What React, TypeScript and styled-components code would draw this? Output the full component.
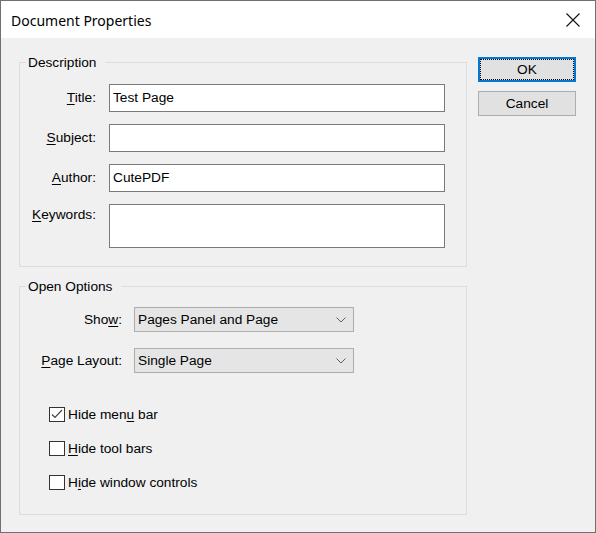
import React from 'react'
import styled, { createGlobalStyle } from 'styled-components'

const GlobalStyle = createGlobalStyle`
	html, body {
		margin: 0;
		padding: 0;
		background: #ffffff;
	}
	* {
		box-sizing: border-box;
	}
`

const Window = styled.div`
	width: 596px;
	height: 533px;
	border: 1px solid #707070;
	display: flex;
	flex-direction: column;
	font-family: 'Liberation Sans', Arial, sans-serif;
	font-size: 13.7px;
	color: #000;
	overflow: hidden;
`

const TitleBar = styled.div`
	height: 37px;
	flex: none;
	background: #fff;
	display: flex;
	align-items: center;
	justify-content: space-between;
	padding: 0 14px 0 10px;
`

const TitleText = styled.div`
	font-family: 'Noto Sans', 'Open Sans', sans-serif;
	font-size: 14px;
	padding-top: 1px;
`

const CloseButton = styled.div`
	width: 16px;
	height: 16px;
	display: flex;
	align-items: center;
	justify-content: center;
`

const Body = styled.div`
	flex: 1;
	background: #f0f0f0;
	display: flex;
	padding: 16px 18px 0 18px;
	gap: 11px;
`

const Groups = styled.div`
	display: flex;
	flex-direction: column;
	gap: 11px;
`

const Group = styled.fieldset<{ $height: number }>`
	margin: 0;
	width: 448px;
	height: ${(p) => p.$height}px;
	border: 1px solid #dcdcdc;
	padding: 0 0 0 6px;
`

const Legend = styled.legend`
	padding: 0 9px 0 2px;
	line-height: 17px;
	margin-left: 0;
`

const FieldGrid = styled.div`
	display: grid;
	grid-template-columns: 70px 336px;
	column-gap: 13px;
	row-gap: 12px;
	margin-top: 13px;
`

const Label = styled.div<{ $top?: number }>`
	text-align: right;
	padding-top: ${(p) => p.$top ?? 6}px;
	line-height: 16px;
	white-space: nowrap;
`

const Key = styled.span`
	text-decoration: underline;
	text-underline-offset: 2px;
`

const TextBox = styled.div<{ $tall?: boolean }>`
	height: ${(p) => (p.$tall ? 44 : 28)}px;
	background: #fff;
	border: 1px solid #7a7a7a;
	padding: 5px 3px;
	line-height: 16px;
`

const OptionGrid = styled.div`
	display: grid;
	grid-template-columns: 96px 220px;
	column-gap: 12px;
	row-gap: 16px;
	margin-top: 12px;
`

const OptionLabel = styled.div`
	text-align: right;
	line-height: 25px;
	white-space: nowrap;
`

const Select = styled.div`
	height: 25px;
	background: #e5e5e5;
	border: 1px solid #adadad;
	display: flex;
	align-items: center;
	justify-content: space-between;
	padding: 0 7px 0 3px;
	line-height: 16px;
`

const Checks = styled.div`
	display: flex;
	flex-direction: column;
	gap: 17px;
	margin-top: 33px;
	padding-left: 23px;
`

const CheckRow = styled.div`
	display: flex;
	align-items: center;
	gap: 3px;
	height: 17px;
	line-height: 16px;
`

const Box = styled.div`
	width: 16px;
	height: 15px;
	border: 1px solid #333;
	background: #fff;
	display: flex;
	align-items: center;
	justify-content: center;
`

const Buttons = styled.div`
	display: flex;
	flex-direction: column;
	gap: 9px;
	padding-top: 3px;
`

const Button = styled.div<{ $default?: boolean }>`
	width: 98px;
	height: 25px;
	background: #e1e1e1;
	border: ${(p) => (p.$default ? '2px solid #0078d7' : '1px solid #adadad')};
	display: flex;
	align-items: center;
	justify-content: center;
	padding: ${(p) => (p.$default ? '1px' : '2px')};
`

const Focus = styled.div<{ $show?: boolean }>`
	width: 100%;
	height: 100%;
	outline: ${(p) => (p.$show ? '1px dotted #000' : 'none')};
	display: flex;
	align-items: center;
	justify-content: center;
	line-height: 16px;
`

const Chevron = () => (
	<svg width="10" height="6" viewBox="0 0 10 6">
		<path d="M0.5 0.5 L5 5 L9.5 0.5" fill="none" stroke="#606060" strokeWidth="1" />
	</svg>
)

const Check = () => (
	<svg width="14" height="13" viewBox="0 0 14 13">
		<path d="M2 6.5 L5 9.5 L12 2" fill="none" stroke="#404040" strokeWidth="1.1" />
	</svg>
)

const descriptionFields = [
	{ key: 'T', rest: 'itle:', value: 'Test Page' },
	{ key: 'S', rest: 'ubject:', value: '' },
	{ key: 'A', rest: 'uthor:', value: 'CutePDF' },
]

const checks = [
	{ before: 'Hide men', key: 'u', after: ' bar', checked: true },
	{ before: '', key: 'H', after: 'ide tool bars', checked: false },
	{ before: 'H', key: 'i', after: 'de window controls', checked: false },
]

export default function App() {
	return (
		<>
			<GlobalStyle />
			<Window>
				<TitleBar>
					<TitleText>Document Properties</TitleText>
					<CloseButton>
						<svg width="14" height="14" viewBox="0 0 14 14">
							<path d="M0.5 0.5 L13.5 13.5 M13.5 0.5 L0.5 13.5" stroke="#111" strokeWidth="1.1" />
						</svg>
					</CloseButton>
				</TitleBar>
				<Body>
					<Groups>
						<Group $height={213}>
							<Legend>Description</Legend>
							<FieldGrid>
								{descriptionFields.map((f) => (
									<React.Fragment key={f.key}>
										<Label>
											<Key>{f.key}</Key>
											{f.rest}
										</Label>
										<TextBox>{f.value}</TextBox>
									</React.Fragment>
								))}
								<Label $top={3}>
									<Key>K</Key>eywords:
								</Label>
								<TextBox $tall />
							</FieldGrid>
						</Group>
						<Group $height={237}>
							<Legend>Open Options</Legend>
							<OptionGrid>
								<OptionLabel>
									Sho<Key>w</Key>:
								</OptionLabel>
								<Select>
									Pages Panel and Page
									<Chevron />
								</Select>
								<OptionLabel>
									<Key>P</Key>age Layout:
								</OptionLabel>
								<Select>
									Single Page
									<Chevron />
								</Select>
							</OptionGrid>
							<Checks>
								{checks.map((c) => (
									<CheckRow key={c.after}>
										<Box>{c.checked && <Check />}</Box>
										<span>
											{c.before}
											<Key>{c.key}</Key>
											{c.after}
										</span>
									</CheckRow>
								))}
							</Checks>
						</Group>
					</Groups>
					<Buttons>
						<Button $default>
							<Focus $show>OK</Focus>
						</Button>
						<Button>
							<Focus>Cancel</Focus>
						</Button>
					</Buttons>
				</Body>
			</Window>
		</>
	)
}
